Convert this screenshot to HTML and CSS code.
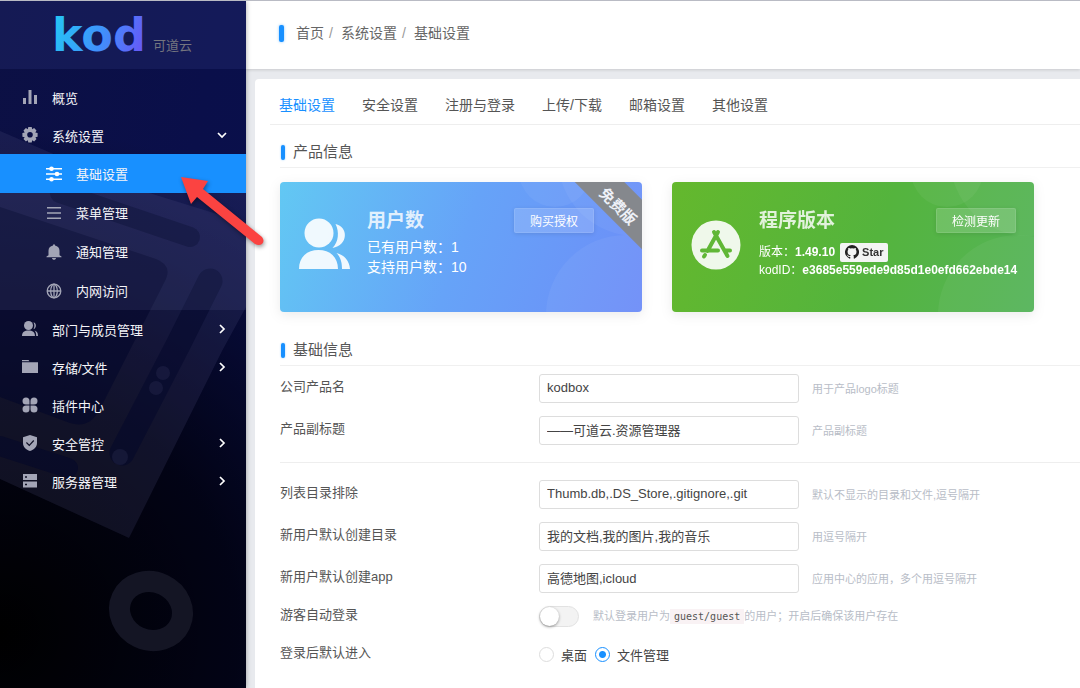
FILE: index.html
```html
<!DOCTYPE html>
<html lang="zh-CN">
<head>
<meta charset="utf-8">
<title>基础设置</title>
<link rel="stylesheet" href="styles.css">
</head>
<body>
<div class="app">
  <aside class="sidebar">
    <svg class="sidebar-art" viewBox="0 0 246 688" preserveAspectRatio="xMidYMin slice" aria-hidden="true">
      <path class="art-light" d="M0 130 L130 186 L246 222 V306 L222 350 L129 537 L0 478 Z"/>
      <path class="art-dark" d="M0 206 L156 258 Q172 264 166 278 L100 408 Q90 428 70 422 L0 396 Z"/>
      <path class="art-slot" d="M60 192 L190 236"/>
      <path class="art-slot wide" d="M210 280 L178 344 L122 452"/>
      <path class="art-slot" d="M0 445 L68 467"/>
      <g class="art-dot"><circle cx="163" cy="372" r="7"/><circle cx="156" cy="387" r="7"/><circle cx="120" cy="456" r="8"/></g>
      <ellipse class="art-ring" cx="151" cy="610" rx="32" ry="29" transform="rotate(25 151 610)"/>
    </svg>
    <div class="brand">
      <svg class="logo" width="98" height="68" viewBox="0 0 98 68" role="img" aria-label="kod">
        <defs><linearGradient id="lg" gradientUnits="userSpaceOnUse" x1="2" y1="18" x2="96" y2="48"><stop offset="0" stop-color="#25c5f5"/><stop offset=".5" stop-color="#3f92fb"/><stop offset="1" stop-color="#6b52f6"/></linearGradient></defs>
        <text class="logo-text" x="0" y="50" fill="url(#lg)">kod</text>
      </svg>
      <span class="brand-name">可道云</span>
    </div>
    <nav class="menu">
      <a class="item" href="#"><svg class="icon" viewBox="0 0 16 16"><path d="M1 9h3v6H1zM6.500 1h3v14h-3zM12 6h3v9h-3z"/></svg><span>概览</span></a>
      <a class="item" href="#"><svg class="icon" viewBox="0 0 16 16"><path fill-rule="evenodd" d="M6.300 0h3.400l.5 2.200 1.900-1.100 2.400 2.400-1.200 1.900 2.300.5v3.800l-2.200.5 1.100 1.900-2.400 2.400-1.900-1.200-.5 2.300H6.300l-.5-2.300-1.900 1.200-2.400-2.400 1.200-1.900L.4 9.700V5.900l2.300-.5-1.200-1.900 2.400-2.400 1.900 1.100zM8 5a2.800 2.800 0 100 5.600A2.800 2.800 0 008 5z"/></svg><span>系统设置</span><svg class="chev" viewBox="0 0 10 10"><path d="M1 3l4 4 4-4"/></svg></a>
      <div class="submenu">
        <a class="item sub active" href="#"><svg class="icon" viewBox="0 0 16 16"><path d="M0 2h16v1.600H0zM0 7.200h16v1.600H0zM0 12.400h16V14H0z"/><circle cx="5.500" cy="2.800" r="2.300"/><circle cx="11" cy="8" r="2.300"/><circle cx="5.500" cy="13.200" r="2.300"/></svg><span>基础设置</span></a>
        <a class="item sub" href="#"><svg class="icon" viewBox="0 0 16 16"><path d="M1 2h14v1.400H1zM1 7.300h14v1.400H1zM1 12.600h14V14H1z"/></svg><span>菜单管理</span></a>
        <a class="item sub" href="#"><svg class="icon" viewBox="0 0 16 16"><path d="M7 .5h2v1c2.800.5 4.500 2.500 4.500 5.200v4.500l2 1.300v.8H.5v-.8l2-1.300V6.700C2.500 4 4.200 2 7 1.500zM6 14h4c0 1-1 1.800-2 1.800S6 15 6 14z"/></svg><span>通知管理</span></a>
        <a class="item sub" href="#"><svg class="icon line" viewBox="0 0 16 16"><circle cx="8" cy="8" r="6.800"/><ellipse cx="8" cy="8" rx="3.300" ry="6.800"/><path d="M1 8h14M8 1v14"/></svg><span>内网访问</span></a>
      </div>
      <a class="item" href="#"><svg class="icon" viewBox="0 0 16 16"><circle cx="6.500" cy="4.500" r="4.500"/><path d="M0 15c0-3.800 2.500-5.500 6.500-5.500S13 11.200 13 15zM11.500 1.200c3.200.8 3.200 6 0 7 1.200-2.200 1.200-4.600 0-7zM12.500 9.600c2.300.6 3.500 2.300 3.500 5.400h-1.800c0-2.300-.5-4-1.700-5.400z"/></svg><span>部门与成员管理</span><svg class="chev" viewBox="0 0 10 10"><path d="M3 1l4 4-4 4"/></svg></a>
      <a class="item" href="#"><svg class="icon" viewBox="0 0 16 16"><path d="M0 1h6.500l1 1.200H0zM0 3.200h16V14H0z"/></svg><span>存储/文件</span><svg class="chev" viewBox="0 0 10 10"><path d="M3 1l4 4-4 4"/></svg></a>
      <a class="item" href="#"><svg class="icon" viewBox="0 0 16 16"><path d="M4 .5A3.500 3.500 0 017.500 4v3.500H4A3.500 3.500 0 014 .5zM12 .5a3.500 3.500 0 010 7H8.500V4A3.500 3.500 0 0112 .5zM4 8.500h3.500V12A3.500 3.500 0 114 8.500zM8.500 8.500H12A3.500 3.500 0 118.500 12z"/></svg><span>插件中心</span></a>
      <a class="item" href="#"><svg class="icon" viewBox="0 0 16 16"><path fill-rule="evenodd" d="M8 0l7 2.300V8c0 4-3 6.600-7 8-4-1.400-7-4-7-8V2.300zM4.800 7L4 8l3.300 3.200L12.200 6l-.9-.9L7.300 9.400z"/></svg><span>安全管控</span><svg class="chev" viewBox="0 0 10 10"><path d="M3 1l4 4-4 4"/></svg></a>
      <a class="item" href="#"><svg class="icon" viewBox="0 0 16 16"><path fill-rule="evenodd" d="M1 1h14v6H1zM3 3.300v1.400h2V3.300zM1 8.500h14v6H1zM3 10.800v1.400h2v-1.400z"/></svg><span>服务器管理</span><svg class="chev" viewBox="0 0 10 10"><path d="M3 1l4 4-4 4"/></svg></a>
    </nav>
  </aside>

  <main class="main">
    <header class="topbar">
      <nav class="crumbs" aria-label="位置"><a href="#">首页</a><i>/</i><a href="#">系统设置</a><i>/</i><a href="#">基础设置</a></nav>
    </header>
    <div class="panel">
      <nav class="tabs">
        <a class="tab current" href="#">基础设置</a><a class="tab" href="#">安全设置</a><a class="tab" href="#">注册与登录</a><a class="tab" href="#">上传/下载</a><a class="tab" href="#">邮箱设置</a><a class="tab" href="#">其他设置</a>
      </nav>
      <h2 class="section-title">产品信息</h2>
      <div class="cards">
        <section class="card users">
          <svg class="bubbles" viewBox="0 0 362 130" preserveAspectRatio="xMaxYMid slice" aria-hidden="true"><circle cx="275" cy="-11" r="36"/><circle cx="356" cy="-24" r="78"/><circle cx="346" cy="133" r="80"/></svg>
          <svg class="card-icon" viewBox="0 0 52 52" aria-hidden="true"><circle cx="20" cy="15" r="14.500"/><path d="M0 51c0-12 8-19 19.500-19S39 39 39 51zM36.500 6c13 3 13 21-3 24 6-6 7-16 3-24zM37.500 35c8 2 13 8 13.500 16h-8c0-7-1.500-12-5.500-16z"/></svg>
          <div class="card-body">
            <h3>用户数</h3>
            <p>已有用户数：1</p>
            <p>支持用户数：10</p>
          </div>
          <button class="card-btn" type="button">购买授权</button>
          <span class="ribbon">免费版</span>
        </section>
        <section class="card version">
          <svg class="bubbles" viewBox="0 0 362 130" preserveAspectRatio="xMaxYMid slice" aria-hidden="true"><circle cx="275" cy="-11" r="36"/><circle cx="356" cy="-24" r="78"/><circle cx="346" cy="133" r="80"/></svg>
          <svg class="card-icon" viewBox="0 0 52 52" aria-hidden="true"><circle cx="25" cy="25" r="24.500"/><g class="store"><path d="M27 12L16.500 31M23 12L36.500 36M11 30.500h16M34 30.500h5M14 35l-1 1.500"/></g></svg>
          <div class="card-body small">
            <h3>程序版本</h3>
            <p>版本：<b>1.49.10</b><a class="star" href="#"><svg viewBox="0 0 16 16" aria-hidden="true"><path d="M8 0a8 8 0 00-2.530 15.590c.4.070.55-.17.55-.38v-1.490c-2.010.37-2.530-.49-2.690-.94-.09-.23-.48-.94-.82-1.130-.28-.15-.68-.52-.01-.53.63-.01 1.080.58 1.230.82.72 1.210 1.870.87 2.330.66.070-.52.28-.87.510-1.070-1.780-.2-3.640-.89-3.640-3.950 0-.87.31-1.590.82-2.150-.08-.2-.36-1.020.08-2.120 0 0 .67-.21 2.200.82a7.400 7.400 0 014 0c1.530-1.040 2.200-.82 2.200-.82.44 1.100.16 1.920.08 2.120.51.56.82 1.270.82 2.150 0 3.070-1.870 3.750-3.650 3.950.29.25.54.73.54 1.480v2.200c0 .21.150.46.55.38A8 8 0 008 0z"/></svg>Star</a></p>
            <p>kodID：<b>e3685e559ede9d85d1e0efd662ebde14</b></p>
          </div>
          <button class="card-btn" type="button">检测更新</button>
        </section>
      </div>
      <h2 class="section-title">基础信息</h2>
      <form class="form">
        <div class="row"><label for="name">公司产品名</label><input class="text" id="name" type="text" value="kodbox"><span class="hint">用于产品logo标题</span></div>
        <div class="row"><label for="subtitle">产品副标题</label><input class="text" id="subtitle" type="text" value="——可道云.资源管理器"><span class="hint">产品副标题</span></div>
        <hr class="rule">
        <div class="row"><label for="exclude">列表目录排除</label><input class="text" id="exclude" type="text" value="Thumb.db,.DS_Store,.gitignore,.git"><span class="hint">默认不显示的目录和文件,逗号隔开</span></div>
        <div class="row"><label for="dirs">新用户默认创建目录</label><input class="text" id="dirs" type="text" value="我的文档,我的图片,我的音乐"><span class="hint">用逗号隔开</span></div>
        <div class="row"><label for="apps">新用户默认创建app</label><input class="text" id="apps" type="text" value="高德地图,icloud"><span class="hint">应用中心的应用，多个用逗号隔开</span></div>
        <div class="row compact"><label for="guest">游客自动登录</label><input class="switch" id="guest" type="checkbox"><span class="hint">默认登录用户为<code>guest/guest</code>的用户；开启后确保该用户存在</span></div>
        <div class="row compact" role="radiogroup" aria-labelledby="enter"><span class="label" id="enter">登录后默认进入</span><label class="choice"><input class="radio" type="radio" name="enter">桌面</label><label class="choice"><input class="radio" type="radio" name="enter" checked>文件管理</label></div>
      </form>
    </div>
  </main>
  <svg class="pointer" width="90" height="74" viewBox="0 0 90 74" aria-hidden="true"><path d="M3 3L30 7 25 15 84 63Q87 67 84 70 81 72 77 70L19 23 13 30Z"/></svg>
</div>
</body>
</html>
```
FILE: styles.css
```css
* { box-sizing: border-box; }
body {
  margin: 0;
  font-family: "Liberation Sans", "Noto Sans CJK SC", sans-serif;
  font-size: 13px;
  color: #555;
  background: #e8eaee;
}
a { color: inherit; text-decoration: none; }
h2, h3, p { margin: 0; font-weight: normal; }

.app {
  position: relative;
  display: flex;
  min-height: 100vh;
  border-top: 1px solid #b9bbc4;
  overflow: hidden;
}

/* Sidebar */
.sidebar {
  position: relative;
  flex: 0 0 246px;
  color: #f4f4f8;
  background:
    radial-gradient(circle at 0 92%, #000 0, rgba(0, 0, 8, .8) 35%, transparent 75%),
    linear-gradient(100deg, #0c1044 0, #0a0f4a 60%, #0a104c 100%);
  box-shadow: 0 0 5px rgba(0, 0, 0, .35);
  z-index: 1;
}
.sidebar-art { position: absolute; inset: 0; width: 100%; height: 100%; }
.art-light { fill: rgba(90, 90, 140, .18); }
.art-dark { fill: rgba(2, 5, 42, .55); }
.art-slot { fill: none; stroke: rgba(2, 5, 42, .5); stroke-width: 20; stroke-linecap: round; }
.art-slot.wide { stroke-width: 25; }
.art-dot { fill: rgba(60, 60, 100, .25); }
.art-ring { fill: none; stroke: #141524; stroke-width: 21; }
.brand {
  position: relative;
  display: flex;
  align-items: flex-end;
  height: 68px;
  padding-left: 52px;
  gap: 3px;
  background: rgba(60, 70, 150, .2);
}
.logo { flex: none; overflow: visible; }
.logo-text { font: bold 46px "DejaVu Sans", sans-serif; }
.brand-name { font-size: 13px; line-height: 14px; padding-bottom: 16px; color: #74757f; }
.menu { position: relative; padding-top: 9px; }
.item {
  display: flex;
  align-items: center;
  gap: 14px;
  height: 38px;
  padding: 0 19px 0 22px;
}
.item.sub { height: 39px; padding-left: 46px; }
.submenu { background: rgba(90, 95, 150, .17); }
.item.active { background: #1890ff; }
.icon { flex: none; width: 16px; height: 16px; fill: #a3a5b6; }
.icon.line { fill: none; stroke: #a3a5b6; stroke-width: 1.3; }
.active .icon { fill: #fff; }
.chev { width: 10px; height: 10px; margin-left: auto; fill: none; stroke: #fff; stroke-width: 1.7; }

/* Main area */
.main { flex: 1; min-width: 0; display: flex; flex-direction: column; }
.topbar {
  height: 68px;
  padding: 20px 0 0 33px;
  background: #fff;
  box-shadow: 0 1px 3px rgba(0, 0, 0, .14);
}
.crumbs { display: flex; align-items: center; font-size: 14px; line-height: 24px; color: #666; }
.crumbs::before {
  content: "";
  width: 5px;
  height: 17px;
  margin-right: 12px;
  border-radius: 2px;
  background: #1890ff;
  box-shadow: 0 0 3px #8cc8ff;
}
.crumbs i { width: 17px; padding-left: 5px; color: #999; font-style: normal; }
.panel {
  flex: 1;
  margin: 10px 0 0 9px;
  padding-left: 25px;
  background: #fff;
  border-radius: 4px 0 0 0;
}
.tabs {
  display: flex;
  gap: 27px;
  height: 46px;
  margin-left: -10px;
  padding-left: 9px;
  border-bottom: 1px solid #eee;
  font-size: 14px;
  line-height: 52px;
}
.tab.current { color: #1890ff; }
.section-title {
  display: flex;
  align-items: center;
  height: 43px;
  padding-top: 12px;
  font-size: 15px;
  line-height: 20px;
  border-bottom: 1px solid #f0f0f0;
}
.section-title::before {
  content: "";
  width: 4px;
  height: 15px;
  margin: 0 8px 0 1px;
  border-radius: 2px;
  background: #1890ff;
  box-shadow: 0 0 2px #8cc8ff;
}

/* Product cards */
.cards {
  display: grid;
  grid-template-columns: 1fr 1fr;
  gap: 30px;
  padding: 14px 46px 11px 0;
  filter: drop-shadow(0 3px 6px rgba(0, 0, 0, .08));
}
.card {
  position: relative;
  display: flex;
  align-items: flex-start;
  height: 130px;
  padding: 26px 18px 0 19px;
  gap: 16px;
  border-radius: 4px;
  color: #fff;
  overflow: hidden;
}
.card.users { background: linear-gradient(110deg, #62c8f3 0, #66a3f8 50%, #6d8df8 100%); }
.card.version { background: linear-gradient(110deg, #64b82d 0, #54b43d 55%, #55b45a 100%); }
.bubbles { position: absolute; inset: 0; width: 100%; height: 100%; fill: rgba(255, 255, 255, .05); }
.card-icon { position: relative; flex: none; width: 52px; height: 52px; margin-top: 10px; fill: rgba(255, 255, 255, .9); }
.version .card-icon { margin-top: 12px; }
.store { fill: none; stroke: #60b736; stroke-width: 4; stroke-linecap: round; }
.card-body { position: relative; flex: 1; min-width: 0; font-size: 14px; line-height: 20px; white-space: nowrap; }
.card-body h3 { font-size: 19px; line-height: 26px; margin-bottom: 3px; font-weight: bold; color: rgba(255, 255, 255, .82); }
.card-body.small { font-size: 12px; line-height: 18px; }
.small h3 { margin-bottom: 9px; }
.small p { display: flex; align-items: center; height: 18px; }
.card-btn {
  position: absolute;
  top: 26px;
  right: 18px;
  width: 80px;
  height: 25px;
  padding: 0;
  border: 1px solid rgba(255, 255, 255, .1);
  border-radius: 2px;
  background: rgba(255, 255, 255, .16);
  box-shadow: 0 1px 4px rgba(0, 0, 0, .1);
  color: #fff;
  font: inherit;
  font-size: 12px;
}
.users .card-btn { right: 48px; }
.ribbon {
  position: absolute;
  top: 4px;
  right: -39px;
  width: 120px;
  height: 35px;
  transform: rotate(45deg);
  background: #85888d;
  color: #eef1f8;
  font-size: 15px;
  font-weight: bold;
  line-height: 43px;
  text-align: center;
}
.star {
  display: flex;
  align-items: center;
  gap: 3px;
  height: 19px;
  margin-left: 5px;
  padding: 0 5px;
  border-radius: 2px;
  background: #f3f4f4;
  color: #333;
  font: bold 11px "Liberation Sans", sans-serif;
}
.star svg { width: 14px; height: 14px; fill: #222; }

/* Settings form */
.form { padding-top: 7px; }
.row { display: flex; align-items: center; min-height: 30px; margin-bottom: 12px; }
.row > label:first-child, .label { flex: 0 0 259px; padding-bottom: 6px; }
.text {
  width: 260px;
  height: 29px;
  padding: 0 7px 1px;
  border: 1px solid #ddd;
  border-radius: 3px;
  background: #fff;
  color: #444;
  font: inherit;
}
.hint { margin-left: 13px; font-size: 11px; color: #b8bdc7; }
.hint code {
  padding: 2px 4px;
  background: #f9f2f4;
  color: #555;
  font: 10px "DejaVu Sans Mono", monospace;
}
.rule { height: 1px; margin: 17px 0 16px; border: 0; background: #eee; }
.row.compact { height: 22px; min-height: 22px; margin-bottom: 16px; }
.row.compact:last-child { margin-bottom: 0; }
.compact .hint { margin-left: 14px; padding-bottom: 2px; }
.switch {
  appearance: none;
  flex: none;
  width: 40px;
  height: 21px;
  margin: 0;
  border: 1px solid #e2e2e2;
  border-radius: 11px;
  background: #f3f3f3;
}
.switch::before {
  content: "";
  display: block;
  width: 19px;
  height: 19px;
  border-radius: 50%;
  background: #fff;
  box-shadow: 0 1px 3px rgba(0, 0, 0, .4);
}
.choice { display: flex; align-items: center; gap: 7px; margin-right: 8px; color: #444; }
.radio {
  appearance: none;
  width: 15px;
  height: 15px;
  margin: 0;
  border: 1px solid #ddd;
  border-radius: 50%;
}
.radio:checked { border-color: #1890ff; background: radial-gradient(circle, #1890ff 3px, #fff 4px); }

/* Pointer over the active entry */
.pointer {
  position: absolute;
  left: 178px;
  top: 173px;
  z-index: 2;
  fill: #fb4341;
  filter: drop-shadow(1px 2px 2px rgba(0, 0, 0, .4));
}
```
